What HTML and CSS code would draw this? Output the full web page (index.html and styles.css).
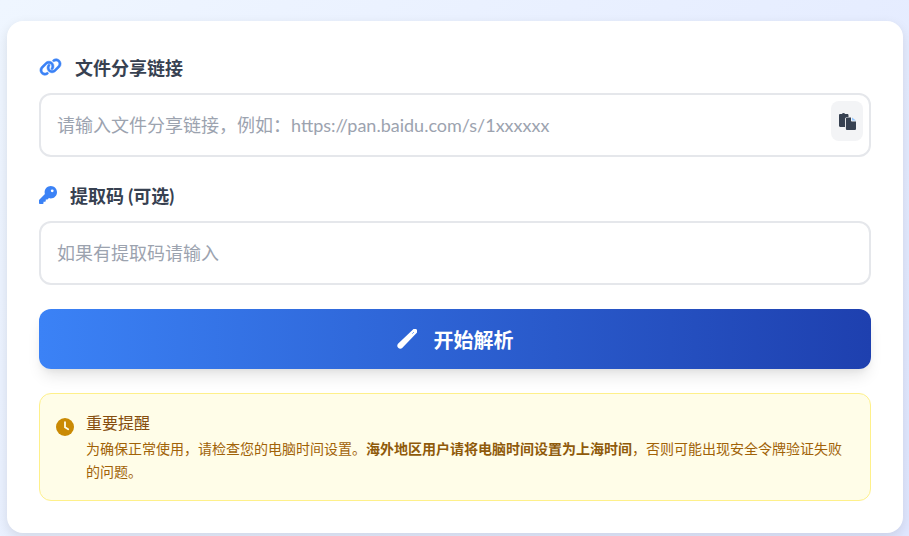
FILE: index.html
```html
<!DOCTYPE html>
<html lang="zh-CN">
<head>
<meta charset="utf-8">
<title>文件分享链接</title>
<link rel="stylesheet" href="styles.css">
</head>
<body>
<main class="card">
  <div class="field">
    <label class="label label-link" for="url">
      <svg class="icon icon-link" viewBox="0 0 640 512"><path d="M579.8 267.7c56.5-56.5 56.5-148 0-204.5-50-50-128.8-56.5-186.3-15.4l-1.6 1.1c-14.4 10.3-17.7 30.3-7.4 44.6s30.3 17.7 44.6 7.4l1.6-1.1c32.1-22.9 76-19.3 103.8 8.6 31.5 31.5 31.5 82.5 0 114L422.3 334.8c-31.5 31.5-82.5 31.5-114 0-27.9-27.9-31.5-71.8-8.6-103.8l1.1-1.6c10.3-14.4 6.9-34.4-7.4-44.6s-34.4-6.9-44.6 7.4l-1.1 1.6c-41.2 57.4-34.7 136.2 15.3 186.2 56.5 56.5 148 56.5 204.5 0l112.2-112.3zM60.2 244.3c-56.5 56.5-56.5 148 0 204.5 50 50 128.8 56.5 186.3 15.4l1.6-1.1c14.4-10.3 17.7-30.3 7.4-44.6s-30.3-17.7-44.6-7.4l-1.6 1.1c-32.1 22.9-76 19.3-103.8-8.6-31.5-31.6-31.5-82.6 0-114.1l112.2-112.2c31.5-31.5 82.5-31.5 114 0 27.9 27.9 31.5 71.8 8.6 103.9l-1.1 1.6c-10.3 14.4-6.9 34.4 7.4 44.6s34.4 6.9 44.6-7.4l1.1-1.6c41.2-57.5 34.7-136.3-15.3-186.3-56.5-56.5-148-56.5-204.5 0L60.2 244.3z"/></svg>
      <span>文件分享链接</span>
    </label>
    <div class="input-wrap">
      <input id="url" class="input" type="text" placeholder="请输入文件分享链接，例如：https://pan.baidu.com/s/1xxxxxx">
      <button class="paste" type="button" aria-label="粘贴">
        <svg viewBox="0 0 17 17" width="17" height="17"><path class="paste-back" d="M0 2.200C0 1.500.5 1 1.200 1h1.700C3.200.4 3.800 0 4.500 0s1.300.4 1.600 1h2.200C9 1 9.500 1.500 9.500 2.200V4H8.200C7 4 6 5 6 6.200V14H1.200C.5 14 0 13.500 0 12.800z"/><path class="paste-back" d="M8.200 4.500H12v3.200c0 .4.300.8.800.8H17v7.200c0 .7-.6 1.300-1.300 1.300H8.200c-.7 0-1.300-.6-1.300-1.300V5.800c0-.7.600-1.300 1.300-1.300z"/><path class="paste-corner" d="M13 4.500l4 3h-4z"/></svg>
      </button>
    </div>
  </div>
  <div class="field">
    <label class="label label-key" for="code">
      <svg class="icon icon-key" viewBox="0 0 512 512"><path d="M336 352c97.200 0 176-78.800 176-176S433.200 0 336 0 160 78.800 160 176c0 18.700 2.900 36.800 8.300 53.700L7 391c-4.500 4.500-7 10.600-7 17v80c0 13.300 10.700 24 24 24h80c13.300 0 24-10.700 24-24v-40h40c13.300 0 24-10.700 24-24v-40h40c6.400 0 12.500-2.500 17-7l33.300-33.300c16.900 5.400 35 8.300 53.700 8.300zM376 96a40 40 0 1 1 0 80 40 40 0 1 1 0-80z"/></svg>
      <span>提取码 (可选)</span>
    </label>
    <input id="code" class="input" type="text" placeholder="如果有提取码请输入">
  </div>
  <button class="submit" type="button">
    <svg class="wand" viewBox="0 0 20 20" width="20" height="20"><path class="wand-body" d="M16 .4c1-1 2.700-1 3.600 0 1 1 1 2.600 0 3.600L5.200 19c-1 1-2.800 1-3.800 0l-.4-.4c-1-1-1-2.800 0-3.800z"/><path class="wand-slit" d="M15.300 4.700l1.600-1.600"/></svg>
    <span>开始解析</span>
  </button>
  <aside class="notice">
    <svg class="clock" viewBox="0 0 18 18" width="18" height="18"><circle class="clock-face" cx="9" cy="9" r="9"/><path class="clock-hand" d="M9 4.200v5l3.200 2.100"/></svg>
    <div class="notice-body">
      <h2 class="notice-title">重要提醒</h2>
      <p class="notice-text">为确保正常使用，请检查您的电脑时间设置。<strong>海外地区用户请将电脑时间设置为上海时间</strong>，否则可能出现安全令牌验证失败的问题。</p>
    </div>
  </aside>
</main>
</body>
</html>
```

FILE: styles.css
```css
* {
  box-sizing: border-box;
}

html,
body {
  height: 100%;
}

body {
  margin: 0;
  padding: 21px 6px 3px 7px;
  overflow: hidden;
  background: linear-gradient(135deg, #eff6ff 0%, #e0e7ff 100%);
  font-family: Lato, "Noto Sans CJK SC", sans-serif;
}

.card {
  height: 512px;
  padding: 32px;
  background: #fff;
  border-radius: 16px;
  box-shadow: 0 4px 12px rgba(0, 0, 0, 0.1);
}

.field {
  margin-bottom: 24px;
}

.label {
  display: flex;
  align-items: center;
  height: 28px;
  margin-bottom: 12px;
  font-size: 18px;
  font-weight: 700;
  color: #374151;
}

.icon {
  fill: #3b82f6;
  flex: none;
}

.icon-link {
  width: 23px;
  height: 18px;
  margin-right: 13px;
  stroke: #3b82f6;
  stroke-width: 14;
}

.icon-key {
  width: 18px;
  height: 18px;
  margin-right: 13px;
}

.input-wrap {
  position: relative;
}

.input {
  display: block;
  width: 100%;
  height: 64px;
  padding: 0 16px;
  border: 2px solid #e5e7eb;
  border-radius: 12px;
  background: #fff;
  outline: none;
  font-family: inherit;
  font-size: 18px;
  color: #374151;
}

.input::placeholder {
  color: #9ca3af;
  opacity: 1;
}

.paste {
  position: absolute;
  top: 8px;
  right: 8px;
  display: flex;
  align-items: center;
  justify-content: center;
  width: 32px;
  height: 40px;
  padding: 0;
  border: 0;
  border-radius: 8px;
  background: #f3f4f6;
}

.paste-back {
  fill: #374151;
}

.paste-corner {
  fill: #93c5fd;
}

.submit {
  display: flex;
  align-items: center;
  justify-content: center;
  gap: 17px;
  width: 100%;
  height: 60px;
  margin-bottom: 24px;
  border: 0;
  border-radius: 12px;
  background: linear-gradient(90deg, #3b82f6 0%, #1e40af 100%);
  box-shadow: 0 10px 15px -3px rgba(0, 0, 0, 0.1), 0 4px 6px -2px rgba(0, 0, 0, 0.05);
  font-family: inherit;
  font-size: 20px;
  font-weight: 700;
  color: #fff;
}

.wand-body {
  fill: #fff;
}

.wand-slit {
  fill: none;
  stroke: #3b82f6;
  stroke-width: 0.8;
}

.notice {
  display: flex;
  align-items: flex-start;
  gap: 12px;
  height: 108px;
  padding: 15px 16px;
  border: 1px solid #fef08a;
  border-radius: 12px;
  background: #fffde8;
}

.clock {
  flex: none;
  margin-top: 9px;
}

.clock-face {
  fill: #ca8a04;
}

.clock-hand {
  fill: none;
  stroke: #fefce8;
  stroke-width: 1.8;
  stroke-linecap: round;
}

.notice-body {
  min-width: 0;
}

.notice-title {
  margin: 0;
  font-size: 16px;
  font-weight: 400;
  line-height: 28px;
  color: #854d0e;
}

.notice-text {
  margin: 0;
  font-size: 14px;
  line-height: 23px;
  color: #a16207;
}

.notice-text strong {
  font-weight: 700;
  color: #8f5a0a;
}
```
